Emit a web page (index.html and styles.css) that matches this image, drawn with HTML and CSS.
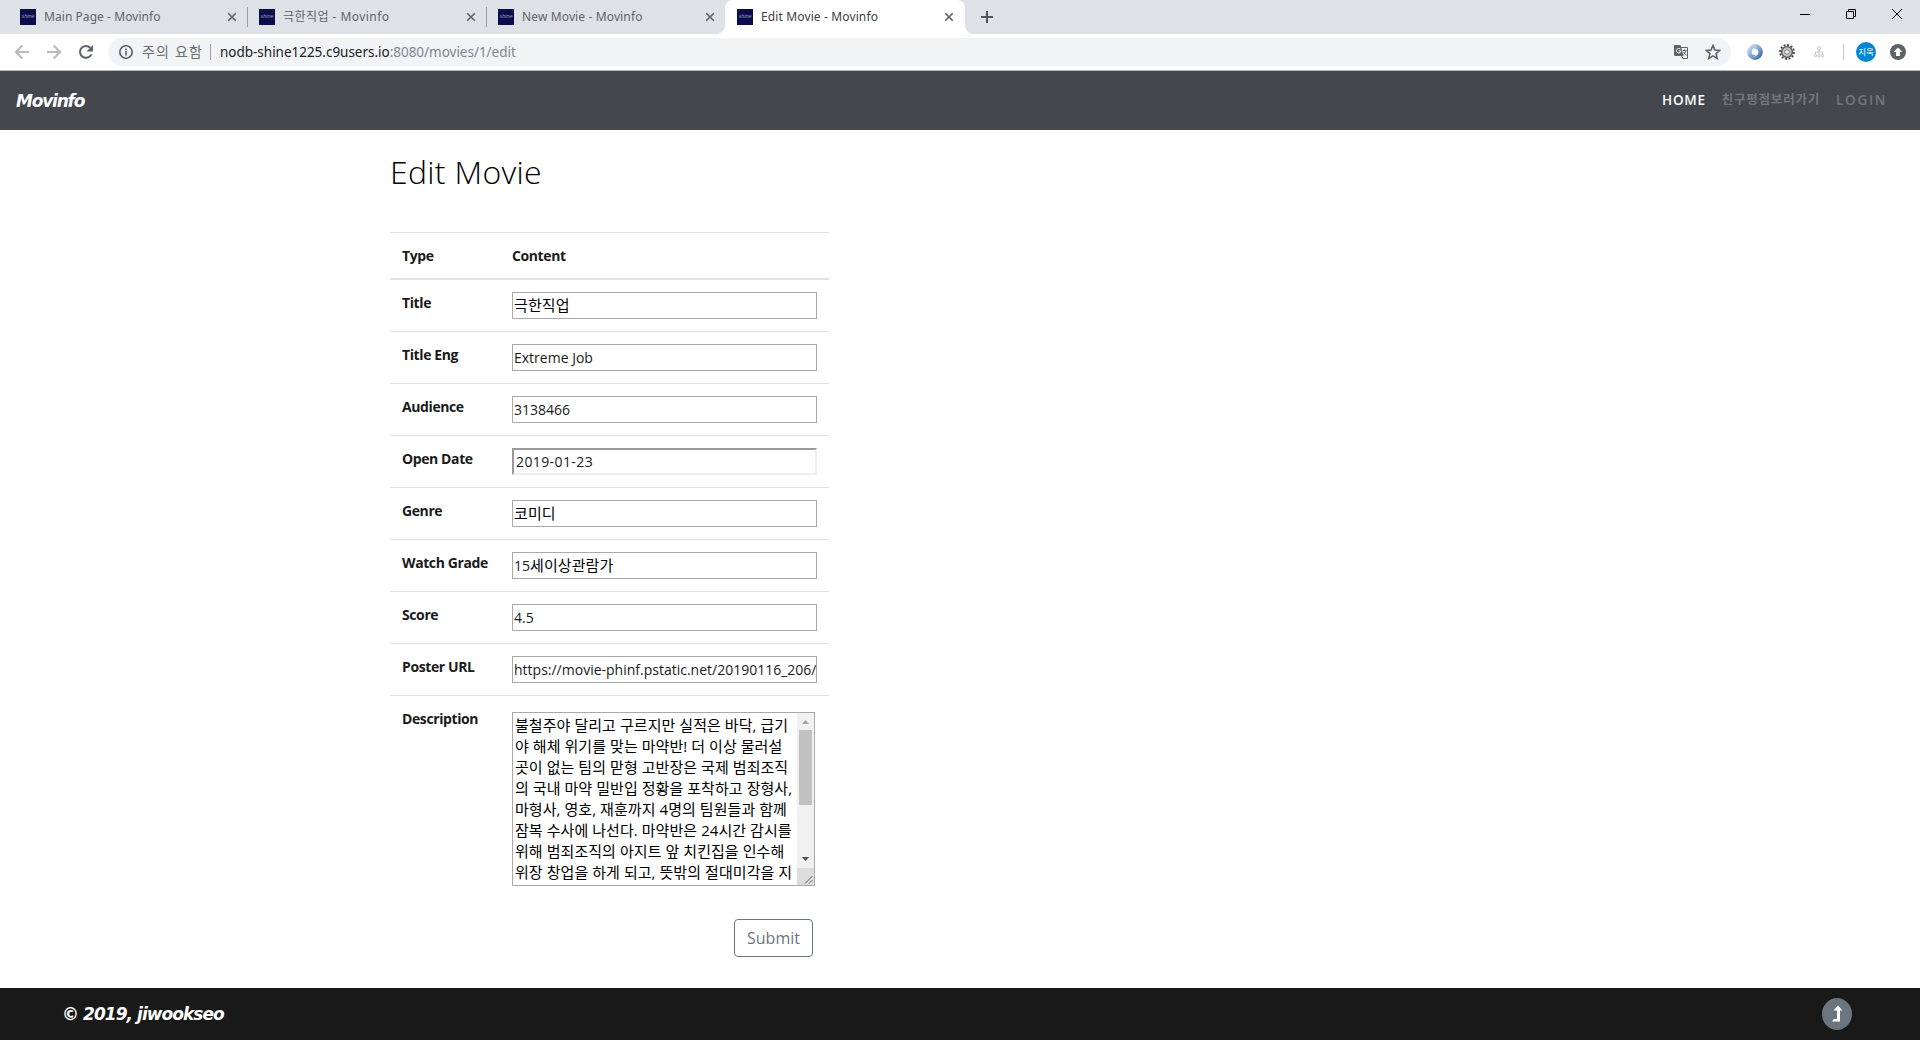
FILE: index.html
```html
<!DOCTYPE html>
<html lang="ko">
<head>
<meta charset="utf-8">
<title>Edit Movie - Movinfo</title>
<link rel="stylesheet" href="styles.css">
</head>
<body>
<div class="tabstrip">
  <div class="tab"><span class="favicon">shine</span><span class="tab-title t1">Main Page - Movinfo</span><svg class="close" viewBox="0 0 10 10"><path d="M1.2 1.2l7.6 7.6M8.8 1.2l-7.6 7.6"/></svg></div>
  <div class="tab"><span class="favicon">shine</span><span class="tab-title t2">극한직업 - Movinfo</span><svg class="close" viewBox="0 0 10 10"><path d="M1.2 1.2l7.6 7.6M8.8 1.2l-7.6 7.6"/></svg></div>
  <div class="tab last"><span class="favicon">shine</span><span class="tab-title t3">New Movie - Movinfo</span><svg class="close" viewBox="0 0 10 10"><path d="M1.2 1.2l7.6 7.6M8.8 1.2l-7.6 7.6"/></svg></div>
  <div class="tab active"><span class="favicon">shine</span><span class="tab-title t4">Edit Movie - Movinfo</span><svg class="close" viewBox="0 0 10 10"><path d="M1.2 1.2l7.6 7.6M8.8 1.2l-7.6 7.6"/></svg></div>
  <svg class="newtab" viewBox="0 0 12 12"><path d="M6 0v12M0 6h12"/></svg>
  <div class="window-controls">
    <svg viewBox="0 0 10 10"><path d="M0 5.5h10"/></svg>
    <svg viewBox="0 0 10 10"><path d="M.5 2.5h7v7h-7zM2.5 2.5v-2h7v7h-2"/></svg>
    <svg viewBox="0 0 10 10"><path d="M0 0l10 10M10 0L0 10"/></svg>
  </div>
</div>
<div class="toolbar">
  <svg class="nav-icon dim" viewBox="0 0 16 16"><path d="M15 8H2M8.3 1.5L1.8 8l6.5 6.5"/></svg>
  <svg class="nav-icon dim" viewBox="0 0 16 16"><path d="M1 8h13M7.7 1.5L14.2 8l-6.5 6.5"/></svg>
  <svg class="nav-icon" viewBox="0 0 16 16"><path d="M13.3 10.3A5.9 5.9 0 1 1 12.3 4"/><path class="solid" d="M15 1v6.5H8.5z"/></svg>
  <div class="omnibox">
    <svg class="info" viewBox="0 0 14 14"><circle cx="7" cy="7" r="6.2"/><path d="M7 6v4.5M7 3.4v1.5"/></svg>
    <span class="warn">주의 요함</span>
    <span class="bar"></span>
    <span class="url"><b>nodb-shine1225.c9users.io</b>:8080/movies/1/edit</span>
    <svg class="translate" viewBox="0 0 14 14"><path class="fill" d="M0 0h6.5l3 11H1.2A1.2 1.2 0 0 1 0 9.800z"/><path d="M7 2.500h6.500v11H8.800L7.800 11"/><path class="white" d="M6.300 4.300A2.200 2.200 0 1 0 6.800 6H4.800"/><path d="M8.500 5.500h4M10.500 4.500v1M12 5.500q-.8 3-2.800 4M9.500 7l3 3.500"/></svg>
    <svg class="star" viewBox="0 0 14 14"><path d="M7 1.300l1.700 3.900 4.200.4-3.200 2.800 1 4.200L7 10.400l-3.700 2.200 1-4.200L1.100 5.600l4.200-.4z"/></svg>
  </div>
  <div class="extensions">
    <svg viewBox="0 0 16 16"><defs><linearGradient id="sw" x1="0" x2="1" y1="0" y2="1"><stop offset="0" stop-color="#c7dbee"/><stop offset="1" stop-color="#4271a9"/></linearGradient></defs><circle cx="8" cy="8" r="5.400" fill="none" stroke="url(#sw)" stroke-width="5"/><path d="M10.500 2.500Q5 5 6.200 11.500 1.500 5 10.500 2.500zM5.500 13.500Q11 11 9.800 4.500 14.500 11 5.500 13.500z" fill="#edf4fa"/></svg>
    <svg viewBox="0 0 16 16"><circle cx="8" cy="8" r="7" fill="none" stroke="#444" stroke-width="1.800" stroke-dasharray="2 1.660"/><circle cx="8" cy="8" r="5.400" fill="#c4c4c4" stroke="#555" stroke-width="1.400"/><circle cx="8" cy="8" r="2.200" fill="#fff" stroke="#777"/></svg>
    <svg viewBox="0 0 16 16" fill="none" stroke="#c6c6c6"><circle cx="8" cy="4.200" r="1.600"/><path d="M8 6v4M4.500 10.500V8h7v2.500"/><circle cx="4.500" cy="11.700" r="1.200"/><circle cx="8" cy="11.700" r="1.200"/><circle cx="11.500" cy="11.700" r="1.200"/></svg>
  </div>
  <span class="tool-sep"></span>
  <span class="avatar">지욱</span>
  <svg class="update" viewBox="0 0 16 16"><circle cx="8" cy="8" r="8" fill="#5f6368"/><path d="M8 3.500l4.400 4.600H10V12H6V8.100H3.600z" fill="#fff"/></svg>
</div>
<nav class="navbar">
  <span class="brand">Movinfo</span>
  <div class="links"><span class="home">HOME</span><span class="friends">친구평점보러가기</span><span class="login">LOGIN</span></div>
</nav>
<main>
  <h1>Edit Movie</h1>
  <table>
    <thead><tr><th>Type</th><th>Content</th></tr></thead>
    <tbody>
      <tr><th>Title</th><td><div class="field ko">극한직업</div></td></tr>
      <tr><th>Title Eng</th><td><div class="field">Extreme Job</div></td></tr>
      <tr><th>Audience</th><td><div class="field">3138466</div></td></tr>
      <tr><th>Open Date</th><td><div class="field date">2019-01-23</div></td></tr>
      <tr><th>Genre</th><td><div class="field ko">코미디</div></td></tr>
      <tr><th>Watch Grade</th><td><div class="field"><span>15</span><span class="ko">세이상관람가</span></div></td></tr>
      <tr><th>Score</th><td><div class="field">4.5</div></td></tr>
      <tr><th>Poster URL</th><td><div class="field">https://movie-phinf.pstatic.net/20190116_206/</div></td></tr>
      <tr><th>Description</th><td>
        <div class="area">
          <div class="area-text">불철주야 달리고 구르지만 실적은 바닥, 급기<br>야 해체 위기를 맞는 마약반! 더 이상 물러설<br>곳이 없는 팀의 맏형 고반장은 국제 범죄조직<br>의 국내 마약 밀반입 정황을 포착하고 장형사,<br>마형사, 영호, 재훈까지 4명의 팀원들과 함께<br>잠복 수사에 나선다. 마약반은 24시간 감시를<br>위해 범죄조직의 아지트 앞 치킨집을 인수해<br>위장 창업을 하게 되고, 뜻밖의 절대미각을 지</div>
          <div class="scroll">
            <svg class="arrow up" viewBox="0 0 17 17"><path d="M5 11h7L8.500 7z"/></svg>
            <span class="thumb"></span>
            <svg class="arrow down" viewBox="0 0 17 17"><path d="M5 6h7l-3.500 4z"/></svg>
            <svg class="grip" viewBox="0 0 17 17"><path d="M8 15.500l7.500-7.500M12 15.500l3.500-3.500"/></svg>
          </div>
        </div>
      </td></tr>
    </tbody>
  </table>
  <div class="actions"><button>Submit</button></div>
</main>
<footer>
  <span class="copy">© 2019, jiwookseo</span>
  <span class="totop"><svg viewBox="0 0 12 18"><path d="M7 .5l4.500 5H9v11H1l2-2.500h3V5.500H2.500z"/></svg></span>
</footer>
</body>
</html>
```
FILE: styles.css
```css
* { box-sizing: border-box; }
body {
  margin: 0;
  width: 1920px;
  height: 1040px;
  overflow: hidden;
  display: flex;
  flex-direction: column;
  background: #fff;
  color: #1a1a1a;
  font: 14px/21px "Open Sans", "Noto Sans CJK KR", sans-serif;
}
svg { display: block; flex: none; fill: none; }
span { white-space: nowrap; }

/* browser tabs */
.tabstrip {
  height: 34px;
  flex: none;
  display: flex;
  background: #dee1e6;
  padding-left: 8px;
}
.tab {
  position: relative;
  width: 239px;
  height: 34px;
  display: flex;
  align-items: center;
  padding: 0 10px 0 12px;
  color: #5f6368;
  font: 12px/18px "Noto Sans", "Noto Sans CJK KR", sans-serif;
}
.tab::after {
  content: "";
  position: absolute;
  right: -1px;
  top: 7px;
  width: 1px;
  height: 20px;
  background: #9a9da1;
}
.tab.last::after { display: none; }
.tab.active {
  width: 240px;
  background: #fff;
  border-radius: 8px 8px 0 0;
  color: #3c4043;
}
.tab.active::before, .tab.active::after {
  content: "";
  display: block;
  position: absolute;
  top: 26px;
  width: 8px;
  height: 8px;
}
.tab.active::before { left: -8px; background: radial-gradient(circle at 0 0, #dee1e6 7.5px, #fff 8px); }
.tab.active::after { right: -8px; background: radial-gradient(circle at 100% 0, #dee1e6 7.5px, #fff 8px); }
.favicon {
  width: 16px;
  height: 16px;
  flex: none;
  background: #0b0d4b;
  color: #9c9cbe;
  font: italic 5.5px/15px "Liberation Sans", sans-serif;
  text-align: center;
}
.tab-title { flex: 1; padding-left: 8px; }
.t1 { letter-spacing: .06px; }
.t2 { letter-spacing: .45px; }
.t3, .t4 { letter-spacing: .13px; }
.close { width: 10px; height: 10px; stroke: #5f6368; stroke-width: 1.6; }
.tab.active .close { margin-right: 1px; }
.newtab { width: 12px; height: 12px; margin: 11px 0 0 16px; stroke: #50545a; stroke-width: 2; }
.window-controls { margin-left: auto; display: flex; gap: 36px; padding: 9px 18px 0 0; }
.window-controls svg { width: 10px; height: 10px; stroke: #000; stroke-width: 1; }

/* browser toolbar */
.toolbar {
  height: 37px;
  flex: none;
  display: flex;
  align-items: center;
  padding: 0 14px;
  border-bottom: 1px solid #b6b7b8;
}
.nav-icon { width: 16px; height: 16px; margin-right: 16px; stroke: #5f6368; stroke-width: 2; }
.nav-icon.dim { stroke: #bbbcbe; }
.nav-icon .solid { fill: #5f6368; stroke: none; }
.omnibox {
  width: 1623px;
  height: 28px;
  margin-left: -2px;
  border-radius: 14px;
  background: #f1f3f4;
  display: flex;
  align-items: center;
  padding: 0 10px 0 11px;
  font: 14px/20px "Noto Sans", "Noto Sans CJK KR", sans-serif;
  color: #80868b;
}
.info { width: 14px; height: 14px; stroke: #5f6368; stroke-width: 1.6; }
.warn { width: 61px; margin-left: 9px; color: #6b6f73; letter-spacing: 1.2px; }
.bar { width: 1px; height: 16px; margin: 0 9px 0 7px; background: #9aa0a6; }
.url { font-size: 13.5px; letter-spacing: -.02px; }
.url b { font-weight: 400; color: #202124; }
.translate { width: 14px; height: 14px; margin-left: auto; stroke: #5f6368; stroke-width: 1; }
.translate .fill { fill: #5f6368; stroke: none; }
.translate .white { stroke: #fff; }
.star { width: 16px; height: 16px; margin-left: 17px; stroke: #5f6368; stroke-width: 1.4; }
.extensions { display: flex; gap: 16px; margin-left: 16px; }
.extensions svg { width: 16px; height: 16px; }
.tool-sep { width: 1px; height: 16px; margin-left: 16px; background: #c8cacc; }
.avatar {
  width: 20px;
  height: 20px;
  margin-left: 12px;
  border-radius: 50%;
  background: #0288d1;
  color: #fff;
  font: 8.5px/19px "Noto Sans CJK KR", sans-serif;
  text-align: center;
}
.update { width: 16px; height: 16px; margin-left: 14px; }

/* site header */
.navbar {
  height: 59px;
  flex: none;
  display: flex;
  align-items: center;
  justify-content: space-between;
  padding: 0 33px 0 16px;
  background: #44484e;
}
.brand { color: #fff; font: italic 700 17px/24px "DejaVu Sans", sans-serif; letter-spacing: -1.2px; }
.links {
  display: flex;
  gap: 16px;
  color: #74777a;
  font: 600 13.5px/20px "Open Sans", "Noto Sans CJK KR", sans-serif;
  padding-bottom: 1px;
}
.home { color: #fff; letter-spacing: .7px; }
.friends { font-size: 12.5px; letter-spacing: .8px; }
.login { letter-spacing: 1.7px; }

/* page body */
main { width: 439px; margin-left: 390px; flex: 1; }
h1 { margin: 23px 0 0; font-size: 32px; line-height: 38px; font-weight: 300; letter-spacing: .3px; color: #000; }
table { width: 439px; margin-top: 41px; border-spacing: 0; table-layout: fixed; }
th, td { padding: 12px; border-top: 1px solid #dee2e6; vertical-align: top; text-align: left; }
th { font-weight: 700; letter-spacing: -.4px; white-space: nowrap; }
th:first-child { width: 110px; }
thead th { border-bottom: 2px solid #dee2e6; }
tbody tr:first-child > * { border-top: 0; }
td { color: #000; }
.field {
  height: 27px;
  width: 305px;
  padding: 2px 1px;
  border: 1px solid #a9a9a9;
  overflow: hidden;
  white-space: nowrap;
  color: #1a1a1a;
}
.field.date { border: 2px solid; border-color: #9a9a9a #eee #eee #9a9a9a; padding: 1px 2px; letter-spacing: .4px; }
.ko { font-size: 15px; color: #000; letter-spacing: .1px; }
.area {
  width: 303px;
  height: 174px;
  margin-top: 4px;
  border: 1px solid #a9a9a9;
  display: flex;
  justify-content: space-between;
  overflow: hidden;
}
.area-text {
  padding: 2px 0 2px 2px;
  height: 172px;
  overflow: hidden;
  white-space: nowrap;
  font-size: 15px;
  line-height: 21px;
  letter-spacing: .06px;
}
.scroll { width: 17px; flex: none; background: #f1f1f1; display: flex; flex-direction: column; }
.arrow { width: 17px; height: 17px; }
.up { fill: #a3a3a3; }
.thumb { height: 75px; margin: 0 2px; background: #c1c1c1; }
.down { margin-top: auto; fill: #505050; }
.grip { width: 17px; height: 17px; background: #dcdcdc; stroke: #666; stroke-width: 1; }
.actions { display: flex; justify-content: flex-end; padding: 21px 16px 0 0; }
button {
  width: 79px;
  height: 38px;
  padding: 0;
  border: 1px solid #6c757d;
  border-radius: 4px;
  background: #fff;
  color: #6c757d;
  font: 400 16px/24px "Open Sans", sans-serif;
}

/* site footer */
footer {
  height: 52px;
  flex: none;
  display: flex;
  align-items: center;
  justify-content: space-between;
  padding: 0 68px 0 62px;
  background: #191919;
}
.copy { color: #fff; font: italic 700 17px/24px "DejaVu Sans", sans-serif; letter-spacing: -.95px; }
.totop { width: 30px; height: 32px; border-radius: 50%; background: #6c757d; display: flex; align-items: center; justify-content: center; }
.totop svg { width: 12px; height: 18px; fill: #fff; }
```
